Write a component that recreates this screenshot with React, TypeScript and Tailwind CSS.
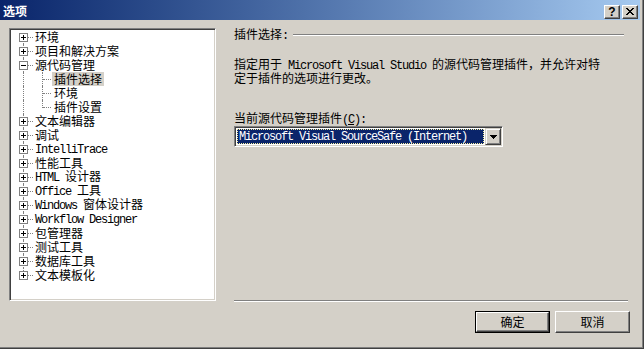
import type { ReactNode } from 'react'

const cjk = "font-['Noto_Sans_CJK_SC',sans-serif]"
const mono = "font-['Liberation_Mono',monospace] tracking-[-1.2px]"

// SimSun-like: ascii runs are half width (6px), cjk full width (12px)
function Txt({ s }: { s: string }) {
  return (
    <span className="whitespace-pre">
      {s.split(/([\x20-\x7E]+)/).map((p, i) =>
        /[\x20-\x7E]/.test(p) ? (
          <span key={i} className={mono}>
            {p}
          </span>
        ) : (
          p
        ),
      )}
    </span>
  )
}

type Item = {
  label: string
  level: 0 | 1
  box?: '+' | '-'
  selected?: boolean
}

const items: Item[] = [
  { label: '环境', level: 0, box: '+' },
  { label: '项目和解决方案', level: 0, box: '+' },
  { label: '源代码管理', level: 0, box: '-' },
  { label: '插件选择', level: 1, selected: true },
  { label: '环境', level: 1 },
  { label: '插件设置', level: 1 },
  { label: '文本编辑器', level: 0, box: '+' },
  { label: '调试', level: 0, box: '+' },
  { label: 'IntelliTrace', level: 0, box: '+' },
  { label: '性能工具', level: 0, box: '+' },
  { label: 'HTML 设计器', level: 0, box: '+' },
  { label: 'Office 工具', level: 0, box: '+' },
  { label: 'Windows 窗体设计器', level: 0, box: '+' },
  { label: 'Workflow Designer', level: 0, box: '+' },
  { label: '包管理器', level: 0, box: '+' },
  { label: '测试工具', level: 0, box: '+' },
  { label: '数据库工具', level: 0, box: '+' },
  { label: '文本模板化', level: 0, box: '+' },
]

function ExpandBox({ plus }: { plus: boolean }) {
  return (
    <svg
      width="9"
      height="9"
      shapeRendering="crispEdges"
      className="absolute top-[3px] left-[8px]"
    >
      <rect x="0.5" y="0.5" width="8" height="8" fill="white" stroke="#808080" />
      <path d="M2 4.5h5" stroke="black" />
      {plus && <path d="M4.5 2v5" stroke="black" />}
    </svg>
  )
}

function TreeRow({ item, index }: { item: Item; index: number }) {
  const first = index === 0
  const last = index === items.length - 1
  const lastChild = item.level === 1 && items[index + 1]?.level !== 1
  const dot = 'absolute border-dotted border-[#808080]'

  return (
    <div className="relative h-[14px]">
      {/* top level vertical line */}
      <span
        className={`${dot} left-[12px] border-l ${
          first ? 'top-[7px] bottom-0' : last ? 'top-0 h-[7px]' : 'top-0 bottom-0'
        }`}
      />
      {item.level === 0 ? (
        <>
          <span className={`${dot} top-[7px] left-[17px] w-[5px] border-t`} />
          {item.box && <ExpandBox plus={item.box === '+'} />}
          <span className="absolute top-0 left-[24px] flex h-[14px] items-center">
            <Txt s={item.label} />
          </span>
        </>
      ) : (
        <>
          <span
            className={`${dot} top-0 left-[31px] border-l ${lastChild ? 'h-[8px]' : 'bottom-0'}`}
          />
          <span className={`${dot} top-[7px] left-[32px] w-[8px] border-t`} />
          <span
            className={`absolute top-0 left-[41px] flex h-[14px] items-center px-[2px] ${
              item.selected ? 'bg-[#d4d0c8]' : ''
            }`}
          >
            <Txt s={item.label} />
          </span>
        </>
      )}
    </div>
  )
}

function Button({ children, isDefault }: { children: ReactNode; isDefault?: boolean }) {
  return (
    <div className={`h-[22px] w-[75px] ${isDefault ? 'border border-black' : ''}`}>
      <div className="flex h-full w-full items-center justify-center border border-t-white border-r-[#404040] border-b-[#404040] border-l-white bg-[#d4d0c8] shadow-[inset_-1px_-1px_#808080]">
        {children}
      </div>
    </div>
  )
}

function CaptionButton({ children }: { children: ReactNode }) {
  return (
    <div className="flex h-[14px] w-[16px] items-center justify-center border border-t-white border-r-[#404040] border-b-[#404040] border-l-white bg-[#d4d0c8] shadow-[inset_-1px_-1px_#808080]">
      {children}
    </div>
  )
}

function Etched({ className = '' }: { className?: string }) {
  return (
    <div className={`h-[2px] border-t border-b border-t-[#808080] border-b-white ${className}`} />
  )
}

function Line({ children, className = '' }: { children: ReactNode; className?: string }) {
  return <div className={`flex h-[13px] items-center ${className}`}>{children}</div>
}

export default function App() {
  return (
    <div
      className={`flex h-[349px] w-[644px] flex-col border-r border-b border-[#404040] bg-[#d4d0c8] text-[12px] text-black ${cjk}`}
    >
      <div className="flex flex-1 flex-col border-r border-b border-[#808080] pr-[2px]">
        {/* Title bar */}
        <div className="flex h-[20px] items-center bg-gradient-to-r from-[#0a246a] to-[#a6caf0] pr-[2px] pl-[3px]">
          <span className="pt-[2px] text-[12px] leading-[14px] font-bold text-white">选项</span>
          <div className="ml-auto flex gap-[2px] pt-[3px]">
            <CaptionButton>
              <span className="font-['Liberation_Sans',sans-serif] text-[12px] leading-none font-bold">
                ?
              </span>
            </CaptionButton>
            <CaptionButton>
              <svg width="8" height="7" shapeRendering="crispEdges">
                <path
                  d="M0 0h2v1H0zM6 0h2v1H6zM1 1h2v1H1zM5 1h2v1H5zM2 2h4v1H2zM3 3h2v1H3zM2 4h4v1H2zM1 5h2v1H1zM5 5h2v1H5zM0 6h2v1H0zM6 6h2v1H6z"
                  fill="black"
                />
              </svg>
            </CaptionButton>
          </div>
        </div>

        {/* Body */}
        <div className="flex items-start gap-[18px] pt-[8px] pl-[9px]">
          {/* Tree */}
          <div className="h-[273px] w-[207px] border border-t-[#808080] border-r-white border-b-white border-l-[#808080] bg-white pt-[1px] pl-[1px] shadow-[inset_1px_1px_#404040,inset_-1px_-1px_#d4d0c8]">
            {items.map((item, i) => (
              <TreeRow key={i} item={item} index={i} />
            ))}
          </div>

          {/* Right side */}
          <div className="flex h-[305px] w-[396px] flex-col">
            <div className="mr-[6px] flex h-[13px] items-center">
              <Txt s="插件选择:" />
              <Etched className="ml-[5px] flex-1" />
            </div>

            <Line className="mt-[17px]">
              <Txt s="指定用于 Microsoft Visual Studio 的源代码管理插件，并允许对特" />
            </Line>
            <Line>
              <Txt s="定于插件的选项进行更改。" />
            </Line>

            <Line className="mt-[28px]">
              <span>
                当前源代码管理插件
                <span className={mono}>
                  (<span className="underline">C</span>):
                </span>
              </span>
            </Line>

            {/* Dropdown */}
            <div className="mt-[1px] flex h-[21px] w-[269px] border border-t-[#808080] border-r-white border-b-white border-l-[#808080] bg-white p-[1px] shadow-[inset_1px_1px_#404040,inset_-1px_-1px_#d4d0c8]">
              <div className="flex flex-1 items-stretch p-[1px]">
                <div className="flex flex-1 items-center border border-dotted border-[#f8f0a0] bg-[#0a246a] pl-[1px] text-white">
                  <span className={mono}>Microsoft Visual SourceSafe (Internet)</span>
                </div>
              </div>
              <div className="flex w-[16px] items-center justify-center border border-t-[#d4d0c8] border-r-[#404040] border-b-[#404040] border-l-[#d4d0c8] bg-[#d4d0c8] shadow-[inset_1px_1px_white,inset_-1px_-1px_#808080]">
                <svg width="7" height="4" shapeRendering="crispEdges">
                  <path d="M0 0h7v1H0zM1 1h5v1H1zM2 2h3v1H2zM3 3h1v1H3z" fill="black" />
                </svg>
              </div>
            </div>

            <Etched className="mt-auto mr-[2px]" />

            <div className="mt-[9px] flex justify-end gap-[5px]">
              <Button isDefault>确定</Button>
              <Button>取消</Button>
            </div>
          </div>
        </div>
      </div>
    </div>
  )
}
